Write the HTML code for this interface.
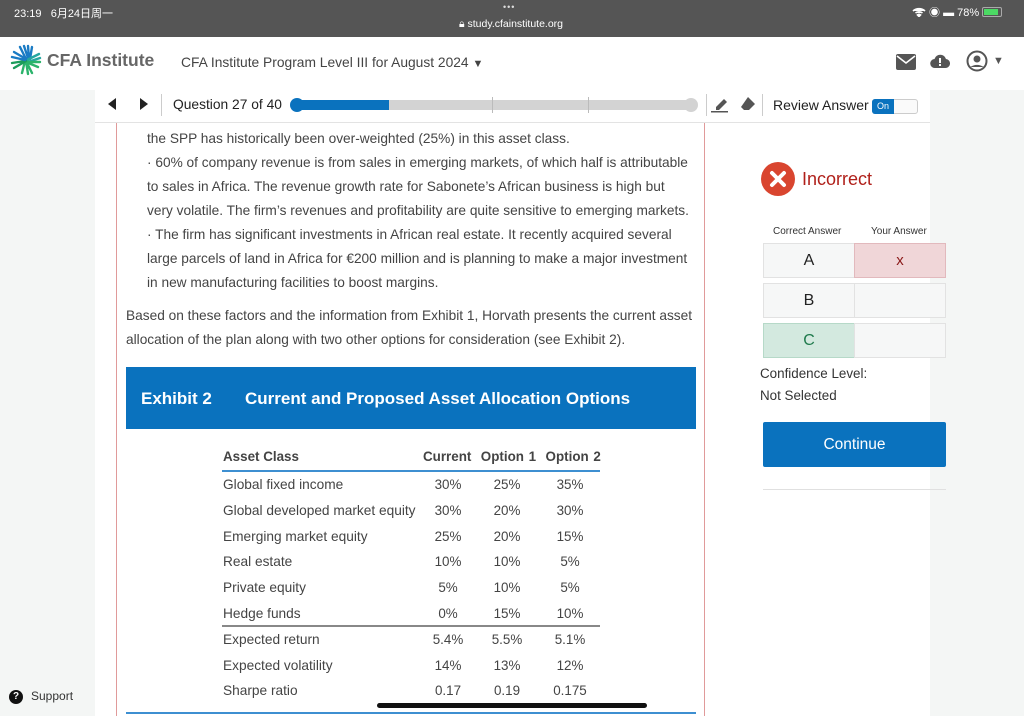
<!DOCTYPE html>
<html><head><meta charset="utf-8"><style>
*{margin:0;padding:0;box-sizing:border-box}
body{width:1024px;height:716px;overflow:hidden;background:#fff;font-family:"Liberation Sans","Noto Sans CJK SC",sans-serif;position:relative;color:#444}
.a{position:absolute;white-space:nowrap}
.t{font-size:13.7px;color:#444}
.c{position:absolute;width:60px;text-align:center;font-size:13.4px;color:#444}
</style></head><body>
<div class="a" style="left:0;top:0;width:1024px;height:37px;background:#555"></div>
<div class="a" style="left:14px;top:5px;color:#fff;font-size:11px">23:19&nbsp;&nbsp;&nbsp;6月24日周一</div>
<div class="a" style="left:503px;top:2px;color:#ddd;font-size:9px;letter-spacing:1px">•••</div>
<div class="a" style="left:459px;top:18px;color:#fff;font-size:10.5px">🔒︎ study.cfainstitute.org</div>
<div class="a" style="left:912px;top:4px;color:#fff;font-size:11px">
<svg width="14" height="10" viewBox="0 0 14 10" style="vertical-align:-1px"><path d="M1 4a9 9 0 0 1 12 0M3.5 6a5.5 5.5 0 0 1 7 0M7 9.5l-1.6-1.6a2.3 2.3 0 0 1 3.2 0z" stroke="#fff" stroke-width="1.6" fill="#fff"/></svg>
◉ ▬ 78% <span style="display:inline-block;width:20px;height:10px;border:1px solid #aaa;border-radius:2px;vertical-align:-1px;padding:1px"><span style="display:block;width:14px;height:6px;background:#4cd964"></span></span></div>

<svg class="a" style="left:10px;top:44px" width="32" height="32" viewBox="0 0 32 32">
<g stroke-width="2.4" stroke-linecap="round">
<g stroke="#1a7bc4"><path d="M10 3l6 12M14 2l4 12M18 2l1 12M22 3l-2 12"/></g>
<g stroke="#25a6a0"><path d="M29 10l-12 6M30 14l-12 4"/></g>
<g stroke="#2bb36b"><path d="M30 18l-13 0M28 23l-12-5M22 29l-6-12M18 30l-2-13M12 29l3-12"/></g>
<g stroke="#1a9c5a"><path d="M4 24l12-7M2 19l13-2"/></g>
<g stroke="#1a7bc4"><path d="M2 13l13 3M4 8l12 7"/></g>
</g></svg>
<div class="a" style="left:47px;top:50px;font-size:17.5px;font-weight:bold;color:#666">CFA Institute</div>
<div class="a" style="left:181px;top:55px;font-size:13.8px;color:#444">CFA Institute Program Level III for August 2024 <span style="font-size:11px">▼</span></div>
<svg class="a" style="left:896px;top:54px" width="20" height="16" viewBox="0 0 20 16"><rect width="20" height="16" rx="2" fill="#555"/><path d="M1 2l9 7 9-7" stroke="#fff" stroke-width="1.6" fill="none"/></svg>
<svg class="a" style="left:930px;top:54px" width="20" height="15" viewBox="0 0 20 15"><path d="M5 14a4.5 4.5 0 0 1-.5-9A6 6 0 0 1 16 5a4.5 4.5 0 0 1-1 9z" fill="#555"/><rect x="9" y="4" width="2" height="5" fill="#fff"/><rect x="9" y="10" width="2" height="2" fill="#fff"/></svg>
<svg class="a" style="left:966px;top:50px" width="22" height="22" viewBox="0 0 22 22"><circle cx="11" cy="11" r="9.5" fill="none" stroke="#555" stroke-width="2"/><circle cx="11" cy="9" r="3.5" fill="#555"/><path d="M4.5 17a8 5 0 0 1 13 0" fill="#555"/></svg>
<div class="a" style="left:993px;top:55px;font-size:11px;color:#555">▼</div>

<div class="a" style="left:0;top:90px;width:95px;height:626px;background:#f4f6f5"></div>
<div class="a" style="left:930px;top:90px;width:94px;height:626px;background:#f4f6f5"></div>
<div class="a" style="left:116px;top:122px;width:1px;height:594px;background:#e09a9a"></div>
<div class="a" style="left:704px;top:122px;width:1px;height:594px;background:#e09a9a"></div>
<div class="a" style="left:95px;top:122px;width:835px;height:1px;background:#e3e3e3"></div>

<svg class="a" style="left:108px;top:98px" width="8" height="12"><path d="M8 0v12L0 6z" fill="#222"/></svg>
<svg class="a" style="left:140px;top:98px" width="8" height="12"><path d="M0 0v12l8-6z" fill="#222"/></svg>
<div class="a" style="left:161px;top:94px;width:1px;height:22px;background:#ccc"></div>
<div class="a" style="left:173px;top:97px;font-size:13.8px;color:#222">Question 27 of 40</div>
<div class="a" style="left:294px;top:100px;width:402px;height:10px;border-radius:5px;background:#d3d3d3"></div>
<div class="a" style="left:294px;top:100px;width:95px;height:10px;border-radius:5px 0 0 5px;background:#0a72be"></div>
<div class="a" style="left:290px;top:98px;width:14px;height:14px;border-radius:7px;background:#0a72be"></div>
<div class="a" style="left:684px;top:98px;width:14px;height:14px;border-radius:7px;background:#d3d3d3"></div>
<div class="a" style="left:492px;top:97px;width:1px;height:16px;background:#bbb"></div>
<div class="a" style="left:588px;top:97px;width:1px;height:16px;background:#bbb"></div>
<div class="a" style="left:706px;top:94px;width:1px;height:22px;background:#ccc"></div>
<svg class="a" style="left:711px;top:97px" width="18" height="16" viewBox="0 0 18 16"><path d="M5 10l8-8 3 3-8 8H5z" fill="#555"/><rect x="0" y="14" width="17" height="1.5" fill="#555"/></svg>
<svg class="a" style="left:739px;top:96px" width="18" height="16" viewBox="0 0 18 16"><path d="M9 1l7 7-6 6H5L2 11z" fill="#555"/></svg>
<div class="a" style="left:762px;top:94px;width:1px;height:22px;background:#ccc"></div>
<div class="a" style="left:773px;top:97px;font-size:14px;color:#222">Review Answer</div>
<div class="a" style="left:872px;top:99px;width:46px;height:15px;border:1px solid #ccc;border-radius:3px;background:#fafafa"></div>
<div class="a" style="left:872px;top:99px;width:22px;height:15px;border-radius:3px 0 0 3px;background:#0a72be;color:#fff;font-size:9px;text-align:center;line-height:15px">On</div>

<div class="a t" style="left:147px;top:131px">the SPP has historically been over-weighted (25%) in this asset class.</div>
<div class="a t" style="left:147px;top:155px">· 60% of company revenue is from sales in emerging markets, of which half is attributable</div>
<div class="a t" style="left:147px;top:179px">to sales in Africa. The revenue growth rate for Sabonete’s African business is high but</div>
<div class="a t" style="left:147px;top:203px">very volatile. The firm’s revenues and profitability are quite sensitive to emerging markets.</div>
<div class="a t" style="left:147px;top:227px">· The firm has significant investments in African real estate. It recently acquired several</div>
<div class="a t" style="left:147px;top:251px">large parcels of land in Africa for €200 million and is planning to make a major investment</div>
<div class="a t" style="left:147px;top:275px">in new manufacturing facilities to boost margins.</div>
<div class="a t" style="left:126px;top:308px">Based on these factors and the information from Exhibit 1, Horvath presents the current asset</div>
<div class="a t" style="left:126px;top:332px">allocation of the plan along with two other options for consideration (see Exhibit 2).</div>

<div class="a" style="left:126px;top:367px;width:570px;height:62px;background:#0a72be"></div>
<div class="a" style="left:141px;top:389px;color:#fff;font-size:17px;font-weight:bold">Exhibit 2</div>
<div class="a" style="left:245px;top:389px;color:#fff;font-size:17px;font-weight:bold">Current and Proposed Asset Allocation Options</div>

<div class="a" style="left:223px;top:449px;font-size:13.4px;font-weight:bold;color:#444">Asset Class</div>
<div class="a" style="left:423px;top:449px;font-size:13.4px;font-weight:bold;color:#444;word-spacing:1px">Current&nbsp; Option 1&nbsp; Option 2</div>
<div class="a" style="left:222px;top:470px;width:378px;height:2px;background:#3d8fd1"></div>
<div class="a" style="left:222px;top:625px;width:378px;height:2px;background:#888"></div>

<div class="a t" style="left:223px;top:477px">Global fixed income</div>
<div class="a t" style="left:223px;top:503px">Global developed market equity</div>
<div class="a t" style="left:223px;top:529px">Emerging market equity</div>
<div class="a t" style="left:223px;top:554px">Real estate</div>
<div class="a t" style="left:223px;top:580px">Private equity</div>
<div class="a t" style="left:223px;top:606px">Hedge funds</div>
<div class="a t" style="left:223px;top:632px">Expected return</div>
<div class="a t" style="left:223px;top:658px">Expected volatility</div>
<div class="a t" style="left:223px;top:683px">Sharpe ratio</div>

<div class="c" style="left:418px;top:477px">30%</div><div class="c" style="left:477px;top:477px">25%</div><div class="c" style="left:540px;top:477px">35%</div>
<div class="c" style="left:418px;top:503px">30%</div><div class="c" style="left:477px;top:503px">20%</div><div class="c" style="left:540px;top:503px">30%</div>
<div class="c" style="left:418px;top:529px">25%</div><div class="c" style="left:477px;top:529px">20%</div><div class="c" style="left:540px;top:529px">15%</div>
<div class="c" style="left:418px;top:554px">10%</div><div class="c" style="left:477px;top:554px">10%</div><div class="c" style="left:540px;top:554px">5%</div>
<div class="c" style="left:418px;top:580px">5%</div><div class="c" style="left:477px;top:580px">10%</div><div class="c" style="left:540px;top:580px">5%</div>
<div class="c" style="left:418px;top:606px">0%</div><div class="c" style="left:477px;top:606px">15%</div><div class="c" style="left:540px;top:606px">10%</div>
<div class="c" style="left:418px;top:632px">5.4%</div><div class="c" style="left:477px;top:632px">5.5%</div><div class="c" style="left:540px;top:632px">5.1%</div>
<div class="c" style="left:418px;top:658px">14%</div><div class="c" style="left:477px;top:658px">13%</div><div class="c" style="left:540px;top:658px">12%</div>
<div class="c" style="left:418px;top:683px">0.17</div><div class="c" style="left:477px;top:683px">0.19</div><div class="c" style="left:540px;top:683px">0.175</div>

<div class="a" style="left:126px;top:712px;width:570px;height:2px;background:#3d8fd1"></div>
<div class="a" style="left:377px;top:703px;width:270px;height:5px;border-radius:3px;background:#111"></div>

<div class="a" style="left:9px;top:690px;width:14px;height:14px;border-radius:7px;background:#111;color:#fff;font-size:10px;font-weight:bold;text-align:center;line-height:14px">?</div>
<div class="a" style="left:31px;top:689px;font-size:12px;color:#333">Support</div>

<div class="a" style="left:761px;top:162px;width:34px;height:34px;border-radius:17px;background:#d9452f"></div>
<svg class="a" style="left:768px;top:169px" width="20" height="20"><path d="M4 4l12 12M16 4L4 16" stroke="#fff" stroke-width="4" stroke-linecap="round"/></svg>
<div class="a" style="left:802px;top:169px;font-size:18px;color:#b0201a">Incorrect</div>
<div class="a" style="left:773px;top:226px;font-size:10px;color:#333">Correct Answer</div>
<div class="a" style="left:871px;top:226px;font-size:10px;color:#333">Your Answer</div>

<div class="a" style="left:763px;top:243px;width:92px;height:35px;border:1px solid #e2e2e2;background:#f6f7f7;font-size:16px;text-align:center;line-height:33px;color:#222">A</div>
<div class="a" style="left:854px;top:243px;width:92px;height:35px;border:1px solid #e2b9bd;background:#f0d6d8;font-size:15px;text-align:center;line-height:33px;color:#8b1a1a">x</div>
<div class="a" style="left:763px;top:283px;width:92px;height:35px;border:1px solid #e2e2e2;background:#f6f7f7;font-size:16px;text-align:center;line-height:33px;color:#222">B</div>
<div class="a" style="left:854px;top:283px;width:92px;height:35px;border:1px solid #e2e2e2;background:#f6f7f7"></div>
<div class="a" style="left:763px;top:323px;width:92px;height:35px;border:1px solid #b6d9c8;background:#d3e9df;font-size:16px;text-align:center;line-height:33px;color:#1f7a4c">C</div>
<div class="a" style="left:854px;top:323px;width:92px;height:35px;border:1px solid #e2e2e2;background:#f6f7f7"></div>

<div class="a" style="left:760px;top:366px;font-size:13.4px;color:#333">Confidence Level:</div>
<div class="a" style="left:760px;top:388px;font-size:13.4px;color:#333">Not Selected</div>
<div class="a" style="left:763px;top:422px;width:183px;height:45px;background:#0a72be;border-radius:2px;color:#fff;font-size:15.5px;text-align:center;line-height:45px">Continue</div>
<div class="a" style="left:763px;top:489px;width:183px;height:1px;background:#e0e0e0"></div>
</body></html>
